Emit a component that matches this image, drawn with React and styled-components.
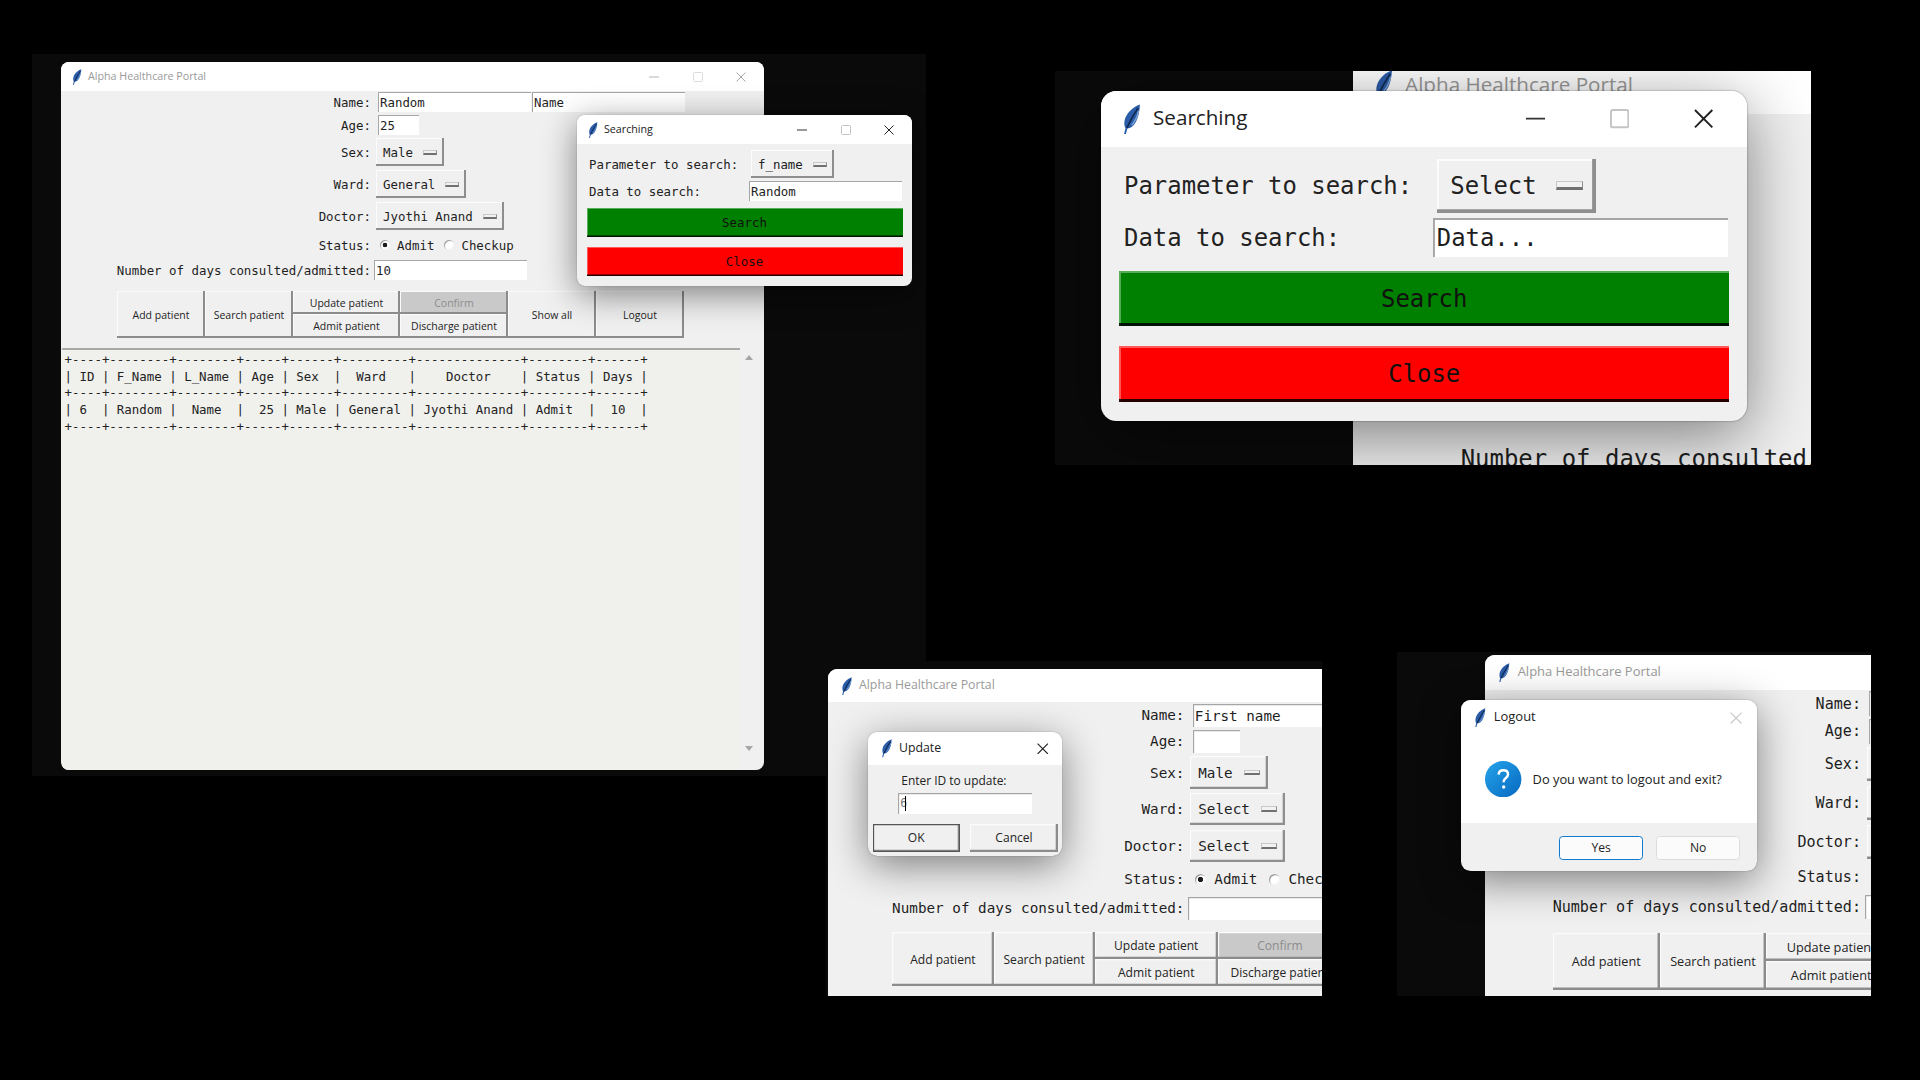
import styled, { createGlobalStyle } from "styled-components";

const MONO = `"DejaVu Sans Mono", "Liberation Mono", monospace`;
const UI = `"Open Sans", "Noto Sans", sans-serif`;

const GlobalStyle = createGlobalStyle`
  html, body {
    margin: 0;
    padding: 0;
    background: #000;
  }
  * {
    box-sizing: border-box;
  }
`;

const Desktop = styled.div`
  position: relative;
  width: 1920px;
  height: 1080px;
  overflow: hidden;
  background: #000;
`;

// one screenshot pasted on the black slide
const Shot = styled.div`
  position: absolute;
  left: ${({ $x }) => $x}px;
  top: ${({ $y }) => $y}px;
  width: ${({ $w }) => $w}px;
  height: ${({ $h }) => $h}px;
  overflow: hidden;
  background: #0a0a0a;
`;

const Placed = styled.div`
  position: absolute;
  left: ${({ $x }) => $x}px;
  top: ${({ $y }) => $y}px;
  zoom: ${({ $zoom }) => $zoom || 1};
`;

const Window = styled.div`
  width: 703px;
  height: 708px;
  display: flex;
  flex-direction: column;
  border-radius: 8px;
  overflow: hidden;
  background: #f0f0f0;
`;

const Dialog = styled.div`
  width: ${({ $w }) => $w}px;
  height: ${({ $h }) => $h}px;
  display: flex;
  flex-direction: column;
  border-radius: 8px;
  overflow: hidden;
  background: #f0f0f0;
  box-shadow: 0 8px 34px rgba(0, 0, 0, 0.48), 0 0 1px rgba(0, 0, 0, 0.5);
`;

const TitleBar = styled.div`
  height: 29px;
  flex: none;
  display: flex;
  align-items: center;
  padding-left: 11px;
  background: #fff;
`;

const Title = styled.span`
  margin: -2px 0 0 6px;
  flex: 1;
  font: 10.7px ${UI};
  color: ${({ $dim }) => ($dim ? "#9a9a9a" : "#222")};
  white-space: nowrap;
`;

const Controls = styled.div`
  display: flex;
  flex: none;
  margin-right: 1px;
`;

const Control = styled.div`
  width: ${({ $narrow }) => ($narrow ? 32 : 43.5)}px;
  height: 29px;
  display: flex;
  align-items: center;
  justify-content: center;
  color: ${({ $color }) => $color};
`;

const Feather = () => (
  <svg width="10" height="16" viewBox="0 0 10 16">
    <path
      d="M9.300.2C5.600 1.400 2.200 4.800 1.400 8.300c-.4 1.700-.2 3.200.4 4.300L1 15.800l.9.1.9-3.200C6.300 12.400 8.900 8 9.300.2z"
      fill="#2a5ca8"
    />
    <path d="M8.400 2C6.400 5 4.200 8.600 2.600 12.400" stroke="#10284f" strokeWidth=".9" fill="none" />
    <path d="M8.600 3.500C8 6.500 6.800 9 5 11" stroke="#7ea6d6" strokeWidth=".7" fill="none" />
  </svg>
);

const MinIcon = () => (
  <svg width="10" height="10" viewBox="0 0 10 10">
    <path d="M0 5h10" stroke="currentColor" fill="none" />
  </svg>
);

const MaxIcon = () => (
  <svg width="10" height="10" viewBox="0 0 10 10">
    <rect x=".5" y=".5" width="9" height="9" rx="1" stroke="currentColor" fill="none" />
  </svg>
);

const CloseIcon = () => (
  <svg width="10" height="10" viewBox="0 0 10 10">
    <path d="M.5.5l9 9M9.5.5l-9 9" stroke="currentColor" fill="none" />
  </svg>
);

const Form = styled.div`
  padding-top: 1px;
  flex: none;
  font: 12.43px ${MONO};
  color: #1e1e1e;
`;

const FormRow = styled.div`
  height: ${({ $h }) => $h}px;
  margin-bottom: ${({ $gap }) => $gap}px;
  display: flex;
  align-items: center;
`;

const Label = styled.div`
  width: 310px;
  flex: none;
  text-align: right;
  white-space: nowrap;
`;

const Field = styled.div`
  margin-left: ${({ $inset }) => $inset}px;
  display: flex;
  align-items: center;
  gap: ${({ $gap }) => $gap || 0}px;
`;

const Entry = styled.div`
  width: ${({ $w }) => $w}px;
  height: 20px;
  flex: none;
  padding-left: 2px;
  background: #fff;
  box-shadow: inset 1px 1px 0 #a6a6a6;
  font: 12.4px/21px ${MONO};
  color: #1e1e1e;
  white-space: nowrap;
`;

const Option = styled.div`
  height: 28px;
  flex: none;
  display: inline-flex;
  align-items: center;
  padding: 0 7px;
  gap: 10px;
  background: #f0f0f0;
  box-shadow: inset -2px -2px 0 #8e8e8e, inset 1px 1px 0 #fcfcfc;
  white-space: nowrap;
`;

const OptionMark = styled.i`
  width: 14px;
  height: 5px;
  flex: none;
  background: #f2f2f2;
  border: 1px solid #c8c8c8;
  border-bottom: 2px solid #707070;
  border-right-color: #8e8e8e;
`;

const Radio = styled.i`
  width: 10px;
  height: 10px;
  flex: none;
  border-radius: 50%;
  background: ${({ $on }) =>
    $on ? "radial-gradient(circle, #1c1c1c 0 2px, #fff 2.6px)" : "#fff"};
  box-shadow: inset 1px 1px 0 #a2a2a2, inset -1px -1px 0 #f4f4f4;
`;

const RadioText = styled.span`
  margin-right: ${({ $after }) => $after || 0}px;
`;

const ButtonGrid = styled.div`
  margin-left: 56px;
  display: grid;
  grid-template-columns: 88px 88px 107px 108px 88px 88px;
  grid-template-rows: 23px 24px;
  width: 567px;
`;

const TkButton = styled.div`
  grid-row: ${({ $tall }) => ($tall ? "span 2" : "auto")};
  display: flex;
  align-items: center;
  justify-content: center;
  font: 10.5px ${UI};
  color: ${({ $off }) => ($off ? "#8d8d8d" : "#242424")};
  background: ${({ $off }) => ($off ? "#c9c9c9" : "#f0f0f0")};
  box-shadow: inset -2px -2px 0 #8c8c8c, inset 1px 1px 0 #fbfbfb;
  white-space: nowrap;
`;

const Output = styled.div`
  flex: 1;
  min-height: 0;
  margin: 10px 0 0 1px;
  display: flex;
`;

const TableText = styled.pre`
  flex: 1;
  margin: 0;
  padding: 2px 0 0 2.500px;
  border-top: 2px solid #a8a8a8;
  background: #f0f0ed;
  font: 12.43px/16.7px ${MONO};
  color: #222;
`;

const ScrollBar = styled.div`
  width: 24px;
  flex: none;
  padding: 7px 6px 19px 0;
  display: flex;
  flex-direction: column;
  justify-content: space-between;
  align-items: center;
`;

const Arrow = styled.i`
  width: 0;
  height: 0;
  border-left: 4px solid transparent;
  border-right: 4px solid transparent;
  border-bottom: ${({ $down }) => ($down ? "0" : "5px solid #a6a6a6")};
  border-top: ${({ $down }) => ($down ? "5px solid #a6a6a6" : "0")};
`;

const SearchBody = styled.div`
  padding: 6px 9.500px 0;
  font: 12.4px ${MONO};
  color: #222;
`;

const SearchRow = styled.div`
  height: ${({ $h }) => $h}px;
  margin-bottom: 3px;
  display: flex;
  align-items: center;
`;

const SearchLabel = styled.div`
  width: ${({ $w }) => $w}px;
  padding-left: 2.500px;
  flex: none;
  white-space: nowrap;
`;

const BigButton = styled.div`
  height: 29px;
  margin-top: ${({ $top }) => $top}px;
  display: flex;
  align-items: center;
  justify-content: center;
  background: ${({ $bg }) => $bg};
  box-shadow: inset 0 -1.500px 0 rgba(0, 0, 0, 0.85), inset 1px 1px 0 rgba(255, 255, 255, 0.35);
  color: #101010;
`;

const UpdateBody = styled.div`
  padding: 7px 4px 0;
`;

const UpdateLabel = styled.div`
  margin-left: 25px;
  font: 10.4px/14px ${UI};
  color: #222;
`;

const UpdateEntry = styled(Entry)`
  margin: 3px 0 0 22px;
  height: 18px;
  line-height: 18px;
  font-size: 10px;
  color: #777;
  display: flex;
  align-items: center;
`;

const Caret = styled.i`
  width: 1px;
  height: 13px;
  margin-left: -2px;
  background: #000;
`;

const DialogButtons = styled.div`
  margin-top: 9px;
  display: flex;
  gap: 9px;
`;

const DialogButton = styled(TkButton)`
  width: 76px;
  height: 24px;
  box-shadow: ${({ $main }) =>
    $main
      ? "inset 0 0 0 1px #555, inset -2px -2px 0 #8c8c8c"
      : "inset -2px -2px 0 #8c8c8c, inset 1px 1px 0 #fbfbfb"};
`;

const MessageArea = styled.div`
  height: 72px;
  flex: none;
  padding-left: 20px;
  display: flex;
  align-items: center;
  gap: 9px;
  background: #fff;
`;

const MessageText = styled.div`
  font: 10.6px ${UI};
  color: #222;
  white-space: nowrap;
`;

const MessageButtons = styled.div`
  padding: 11px 14px 0 0;
  display: flex;
  justify-content: flex-end;
  gap: 11px;
`;

const MessageButton = styled.div`
  width: 69px;
  height: 20px;
  display: flex;
  align-items: center;
  justify-content: center;
  border-radius: 3px;
  border: ${({ $main }) => ($main ? "1.500px solid #0f7bd0" : "1px solid #dcdcdc")};
  background: #fbfbfb;
  font: 10px ${UI};
  color: #222;
`;

const QuestionIcon = () => (
  <svg width="30" height="30" viewBox="0 0 30 30">
    <defs>
      <linearGradient id="q" x1="0" y1="0" x2="1" y2="1">
        <stop offset="0" stopColor="#25a4ea" />
        <stop offset="1" stopColor="#0668c0" />
      </linearGradient>
    </defs>
    <circle cx="15" cy="15" r="15" fill="url(#q)" />
    <path
      d="M11.200 11.200c.2-2.300 1.800-3.600 4-3.600s3.800 1.300 3.800 3.300c0 1.500-.8 2.400-2 3.300-1.100.8-1.600 1.400-1.600 2.800v.6"
      stroke="#fff"
      strokeWidth="2"
      fill="none"
    />
    <circle cx="15.400" cy="21.400" r="1.400" fill="#fff" />
  </svg>
);

const TABLE = `+----+--------+--------+-----+------+---------+--------------+--------+------+
| ID | F_Name | L_Name | Age | Sex  |  Ward   |    Doctor    | Status | Days |
+----+--------+--------+-----+------+---------+--------------+--------+------+
| 6  | Random |  Name  |  25 | Male | General | Jyothi Anand | Admit  |  10  |
+----+--------+--------+-----+------+---------+--------------+--------+------+`;

const TitleControls = ({ tones, closeOnly }) => (
  <Controls>
    {!closeOnly && (
      <>
        <Control $color={tones[0]}><MinIcon /></Control>
        <Control $color={tones[1]}><MaxIcon /></Control>
      </>
    )}
    <Control $narrow={closeOnly} $color={tones[2]}><CloseIcon /></Control>
  </Controls>
);

const PortalWindow = ({ first, last, age, sex, ward, doctor, days, table }) => (
  <Window>
    <TitleBar>
      <Feather />
      <Title $dim>Alpha Healthcare Portal</Title>
      <TitleControls tones={["#b4b4b4", "#dcdcdc", "#a8a8a8"]} />
    </TitleBar>
    <Form>
      <FormRow $h={20} $gap={3}>
        <Label>Name:</Label>
        <Field $inset={7} $gap={1}>
          <Entry $w={153}>{first}</Entry>
          <Entry $w={153}>{last}</Entry>
        </Field>
      </FormRow>
      <FormRow $h={20} $gap={3}>
        <Label>Age:</Label>
        <Field $inset={7}><Entry $w={41}>{age}</Entry></Field>
      </FormRow>
      <FormRow $h={28} $gap={4}>
        <Label>Sex:</Label>
        <Field $inset={5}><Option>{sex}<OptionMark /></Option></Field>
      </FormRow>
      <FormRow $h={28} $gap={4}>
        <Label>Ward:</Label>
        <Field $inset={5}><Option>{ward}<OptionMark /></Option></Field>
      </FormRow>
      <FormRow $h={28} $gap={4}>
        <Label>Doctor:</Label>
        <Field $inset={5}><Option>{doctor}<OptionMark /></Option></Field>
      </FormRow>
      <FormRow $h={22} $gap={4}>
        <Label>Status:</Label>
        <Field $inset={9} $gap={7}>
          <Radio $on />
          <RadioText $after={3}>Admit</RadioText>
          <Radio />
          <RadioText>Checkup</RadioText>
        </Field>
      </FormRow>
      <FormRow $h={20} $gap={11}>
        <Label>Number of days consulted/admitted:</Label>
        <Field $inset={3}><Entry $w={153}>{days}</Entry></Field>
      </FormRow>
      <ButtonGrid>
        <TkButton $tall>Add patient</TkButton>
        <TkButton $tall>Search patient</TkButton>
        <TkButton>Update patient</TkButton>
        <TkButton $off>Confirm</TkButton>
        <TkButton $tall>Show all</TkButton>
        <TkButton $tall>Logout</TkButton>
        <TkButton>Admit patient</TkButton>
        <TkButton>Discharge patient</TkButton>
      </ButtonGrid>
    </Form>
    <Output>
      <TableText>{table ? TABLE : ""}</TableText>
      <ScrollBar>
        <Arrow />
        <Arrow $down />
      </ScrollBar>
    </Output>
  </Window>
);

const SearchDialog = ({ param, data }) => (
  <Dialog $w={335} $h={171}>
    <TitleBar>
      <Feather />
      <Title>Searching</Title>
      <TitleControls tones={["#333", "#c4c4c4", "#222"]} />
    </TitleBar>
    <SearchBody>
      <SearchRow $h={28}>
        <SearchLabel $w={164.500}>Parameter to search:</SearchLabel>
        <Option>{param}<OptionMark /></Option>
      </SearchRow>
      <SearchRow $h={20}>
        <SearchLabel $w={162.500}>Data to search:</SearchLabel>
        <Entry $w={153}>{data}</Entry>
      </SearchRow>
      <BigButton $top={7} $bg="#008000">Search</BigButton>
      <BigButton $top={10} $bg="#ff0000">Close</BigButton>
    </SearchBody>
  </Dialog>
);

const UpdateDialog = () => (
  <Dialog $w={169} $h={108}>
    <TitleBar>
      <Feather />
      <Title>Update</Title>
      <TitleControls closeOnly tones={["", "", "#222"]} />
    </TitleBar>
    <UpdateBody>
      <UpdateLabel>Enter ID to update:</UpdateLabel>
      <UpdateEntry $w={117}>6<Caret /></UpdateEntry>
      <DialogButtons>
        <DialogButton $main>OK</DialogButton>
        <DialogButton>Cancel</DialogButton>
      </DialogButtons>
    </UpdateBody>
  </Dialog>
);

const LogoutDialog = () => (
  <Dialog $w={244} $h={141}>
    <TitleBar>
      <Feather />
      <Title>Logout</Title>
      <TitleControls closeOnly tones={["", "", "#c8c8c8"]} />
    </TitleBar>
    <MessageArea>
      <QuestionIcon />
      <MessageText>Do you want to logout and exit?</MessageText>
    </MessageArea>
    <MessageButtons>
      <MessageButton $main>Yes</MessageButton>
      <MessageButton>No</MessageButton>
    </MessageButtons>
  </Dialog>
);

const App = () => (
  <Desktop>
    <GlobalStyle />

    <Shot $x={32} $y={54} $w={894} $h={722}>
      <Placed $x={29} $y={8}>
        <PortalWindow
          first="Random"
          last="Name"
          age="25"
          sex="Male"
          ward="General"
          doctor="Jyothi Anand"
          days="10"
          table
        />
      </Placed>
      <Placed $x={545} $y={61}>
        <SearchDialog param="f_name" data="Random" />
      </Placed>
    </Shot>

    <Shot $x={1055} $y={71} $w={756} $h={394}>
      <Placed $x={154.400} $y={-6.800} $zoom={1.93}>
        <PortalWindow first="First name" sex="Male" ward="Select" doctor="Select" />
      </Placed>
      <Placed $x={23.800} $y={10.400} $zoom={1.93}>
        <SearchDialog param="Select" data="Data..." />
      </Placed>
    </Shot>

    <Shot $x={826} $y={661} $w={496} $h={335}>
      <Placed $x={1.700} $y={7} $zoom={1.15}>
        <PortalWindow first="First name" sex="Male" ward="Select" doctor="Select" />
      </Placed>
      <Placed $x={36.500} $y={61.700} $zoom={1.15}>
        <UpdateDialog />
      </Placed>
    </Shot>

    <Shot $x={1397} $y={652} $w={474} $h={344}>
      <Placed $x={72.500} $y={2.500} $zoom={1.213}>
        <PortalWindow first="First name" sex="Male" ward="Select" doctor="Select" />
      </Placed>
      <Placed $x={52.800} $y={39.600} $zoom={1.213}>
        <LogoutDialog />
      </Placed>
    </Shot>
  </Desktop>
);

export default App;
